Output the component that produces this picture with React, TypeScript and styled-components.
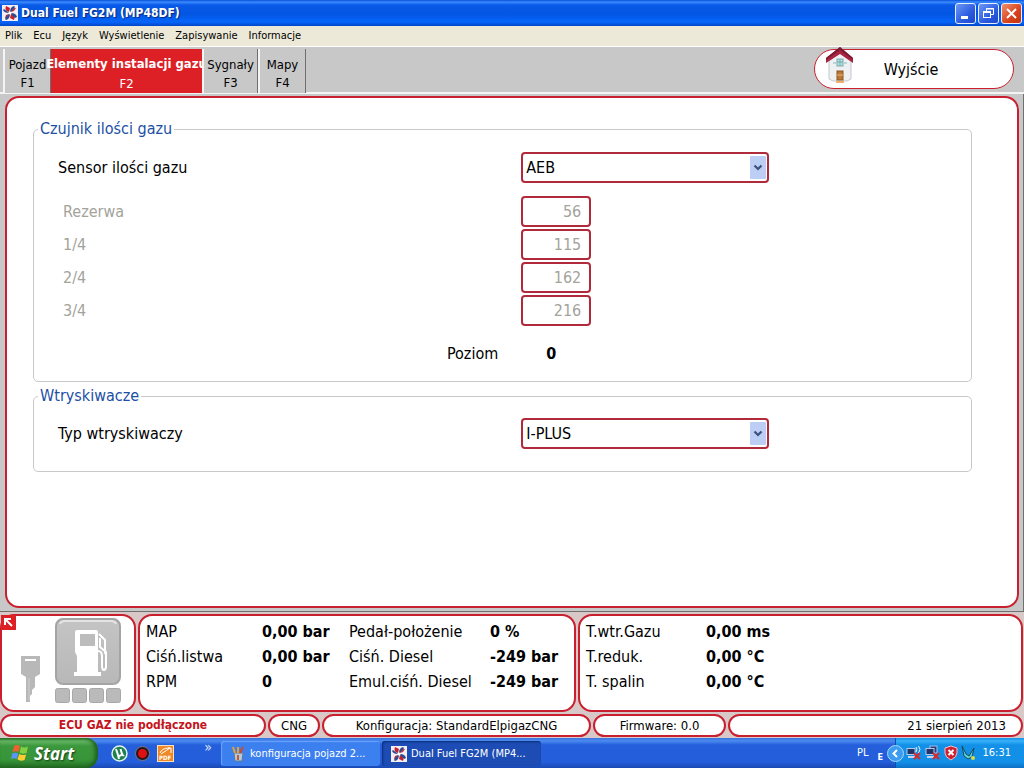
import React from "react";
import styled, { createGlobalStyle } from "styled-components";

const RED = "#c9202f";
const FACE = "#c8c8c8";

const GlobalStyle = createGlobalStyle`
  * { box-sizing: border-box; }
  body { margin: 0; background: ${FACE}; }
  body, button, input, select {
    font-family: "DejaVu Sans Condensed", "DejaVu Sans", "Noto Sans", sans-serif;
  }
`;

const Page = styled.div`
  min-height: 100vh;
  display: flex;
  flex-direction: column;
  color: #000;
  font-size: 16px;
  line-height: 20px;
`;

const TitleBar = styled.header`
  display: flex;
  align-items: center;
  gap: 3px;
  height: 26px;
  padding: 0 2px;
  background: linear-gradient(#0a50d8 0, #3a8bff 2px, #0a5ae8 5px, #0455e2 14px, #0566fb 22px, #0345c4 26px);
`;

const AppTitle = styled.h1`
  margin: 0;
  flex: 1;
  color: #fff;
  font-size: 12px;
  font-weight: bold;
  white-space: nowrap;
  text-shadow: 1px 1px 1px #0a2a80;
`;

const WindowButtons = styled.div`
  display: flex;
  gap: 2px;
`;

const WindowButton = styled.button<{ $close?: boolean }>`
  width: 21px;
  height: 21px;
  padding: 0;
  display: grid;
  place-items: center;
  border: 1px solid #e8eefc;
  border-radius: 3px;
  background: ${(p) => (p.$close ? "linear-gradient(135deg, #f0906c, #d8421c 60%, #c03410)" : "linear-gradient(135deg, #6c98f4, #2c5ce0 60%, #1c48cc)")};
`;

const MenuBar = styled.nav`
  display: flex;
  gap: 11px;
  height: 20px;
  padding: 0 5px;
  background: #ece9d8;
`;

const MenuItem = styled.button`
  padding: 0;
  border: 0;
  background: none;
  color: #000;
  font-size: 11px;
  line-height: 20px;
  white-space: nowrap;
`;

const ToolBar = styled.div`
  display: flex;
  justify-content: space-between;
  height: 48px;
  padding: 2px 10px 0 3px;
  border-top: 1px solid #fff;
  border-bottom: 2px solid #f4f4f4;
  background: ${FACE};
`;

const TabList = styled.div`
  display: flex;
`;

const Tab = styled.button<{ $active?: boolean; $width: number }>`
  width: ${(p) => p.$width}px;
  height: 44px;
  padding: 5px 0 0;
  display: flex;
  flex-direction: column;
  align-items: center;
  justify-content: center;
  border: 0;
  border-left: ${(p) => (p.$active ? "0" : "2px solid #f4f4f4")};
  border-right: ${(p) => (p.$active ? "0" : "1px solid #6e6e6e")};
  background: ${(p) => (p.$active ? "#dc2026" : FACE)};
  color: ${(p) => (p.$active ? "#fff" : "#000")};
  font-size: 13px;
  line-height: ${(p) => (p.$active ? 20 : 18)}px;
  white-space: nowrap;
  span:first-child { font-weight: ${(p) => (p.$active ? "bold" : "normal")}; }
`;

const ExitButton = styled.button`
  position: relative;
  width: 200px;
  height: 40px;
  padding: 0 6px 0 0;
  border: 1px solid ${RED};
  border-radius: 20px;
  background: #fff;
  color: #000;
  font-size: 16px;
  svg { position: absolute; left: 10px; top: -4px; }
`;

const Workspace = styled.main`
  flex: 1;
  display: flex;
  padding: 2px 4px 3px 5px;
  border-right: 1px solid #707070;
  border-bottom: 1px solid #707070;
`;

const Panel = styled.section`
  flex: 1;
  padding: 21px 45px 21px 26px;
  border: 2px solid ${RED};
  border-radius: 14px;
  background: #fff;
`;

const Group = styled.fieldset`
  min-width: 0;
  margin: 0 0 4px;
  padding: 13px 0 17px;
  border: 1px solid #c9c9c9;
  border-radius: 5px;
  &:last-child { padding: 12px 0 22px; }
`;

const GroupTitle = styled.legend`
  margin-left: 4px;
  padding: 0 2px;
  color: #1c50a4;
  font-size: 16px;
  line-height: 20px;
`;

const Row = styled.div<{ $gap?: number }>`
  display: grid;
  grid-template-columns: 52% 1fr;
  align-items: center;
  margin-top: ${(p) => p.$gap || 0}px;
`;

const Label = styled.label<{ $muted?: boolean }>`
  padding-left: ${(p) => (p.$muted ? 29 : 24)}px;
  color: ${(p) => (p.$muted ? "#a3a39b" : "#000")};
`;

const LevelLabel = styled.span`
  padding-right: 23px;
  text-align: right;
`;

const LevelValue = styled.output`
  padding-left: 25px;
  font-weight: bold;
`;

const SelectBox = styled.div`
  position: relative;
  width: 248px;
  svg { position: absolute; right: 3px; top: 4px; pointer-events: none; }
`;

const Select = styled.select`
  appearance: none;
  display: block;
  width: 100%;
  height: 31px;
  padding: 0 24px 0 3px;
  border: 2px solid #b02a3c;
  border-radius: 4px;
  background: #fff;
  color: #000;
  font-size: 16px;
`;

const NumberBox = styled.input`
  width: 70px;
  height: 31px;
  padding: 0 8px 0 0;
  border: 2px solid #b02a3c;
  border-radius: 4px;
  background: #fff;
  color: #a3a39b;
  font-size: 16px;
  text-align: right;
`;

const Dashboard = styled.section`
  display: grid;
  grid-template-columns: 136px minmax(0, 438fr) minmax(0, 445fr);
  gap: 2px;
  padding: 2px 1px 2px 0;
  background: #d8c8c8;
`;

const Card = styled.div`
  position: relative;
  height: 98px;
  border: 2px solid ${RED};
  border-radius: 14px;
  background: #fff;
`;

const IndicatorCard = styled(Card)`
  display: flex;
  gap: 15px;
  padding: 2px 0 0 19px;
`;

const KeyIcon = styled.svg`
  margin-top: 38px;
`;

const CornerButton = styled.button`
  position: absolute;
  left: -1px;
  top: -1px;
  width: 15px;
  height: 15px;
  padding: 0;
  display: grid;
  border: 0;
  background: #dc2026;
`;

const Readings = styled.dl<{ $columns: string }>`
  display: grid;
  grid-template-columns: ${(p) => p.$columns};
  margin: 0;
  padding: 3px 0 0 6px;
  line-height: 25px;
  white-space: nowrap;
  dt, dd { margin: 0; }
  dd { font-weight: bold; }
`;

const StatusBar = styled.footer`
  display: grid;
  grid-template-columns: 266fr 52fr 269fr 133fr 295fr;
  gap: 2px;
  padding: 0 1px 1px 0;
  background: #d8c8c8;
`;

const StatusPill = styled.div<{ $alert?: boolean; $right?: boolean }>`
  height: 23px;
  padding: 0 ${(p) => (p.$right ? 15 : 2)}px 0 2px;
  border: 2px solid ${RED};
  border-radius: 12px;
  background: #fff;
  color: ${(p) => (p.$alert ? "#c41420" : "#000")};
  font-size: ${(p) => (p.$alert ? 12 : 13)}px;
  font-weight: ${(p) => (p.$alert ? "bold" : "normal")};
  line-height: 19px;
  text-align: ${(p) => (p.$right ? "right" : "center")};
  white-space: nowrap;
`;

const TaskBar = styled.nav`
  display: flex;
  height: 30px;
  background: linear-gradient(#3a74dc 0, #4a8af0 3px, #245edb 7px, #245edb 24px, #1a48b4 30px);
  color: #fff;
`;

const StartButton = styled.button`
  display: flex;
  align-items: center;
  gap: 5px;
  width: 98px;
  padding: 0 0 0 11px;
  border: 0;
  border-radius: 0 12px 12px 0;
  background: linear-gradient(#2c7c2c 0, #66b866 3px, #3c983c 8px, #389438 22px, #226c22 30px);
  box-shadow: inset -3px 0 4px #1f5c1f;
  color: #fff;
  font-family: "Open Sans", "Noto Sans", sans-serif;
  font-size: 17px;
  font-style: italic;
  font-weight: bold;
  text-shadow: 1px 1px 2px #143c14;
`;

const QuickLaunch = styled.div`
  display: flex;
  align-items: center;
  gap: 6px;
  width: 122px;
  padding: 0 8px 0 13px;
`;

const IconButton = styled.button`
  display: grid;
  padding: 0;
  border: 0;
  background: none;
`;

const More = styled.button`
  align-self: flex-start;
  margin-left: auto;
  padding: 0;
  border: 0;
  background: none;
  color: #dce8ff;
  font-size: 14px;
  line-height: 18px;
`;

const Tasks = styled.div`
  display: flex;
  gap: 2px;
  flex: 1;
  min-width: 0;
  padding: 3px 0 2px 1px;
`;

const Task = styled.button<{ $active?: boolean }>`
  display: flex;
  align-items: center;
  gap: 4px;
  flex: 0 1 159px;
  min-width: 0;
  padding: 0 8px 0 9px;
  overflow: hidden;
  border: 0;
  border-radius: 3px;
  background: ${(p) => (p.$active ? "#1c4cb4" : "#3c80f0")};
  box-shadow: ${(p) => (p.$active ? "inset 1px 1px 2px #0c2c78" : "inset 1px 1px 1px #6ca4fc")};
  color: #fff;
  font-size: 11px;
  white-space: nowrap;
  svg { flex: none; }
`;

const Language = styled.div`
  display: flex;
  align-items: center;
  gap: 9px;
  padding: 0 12px 0 0;
  font-size: 11px;
  small { align-self: flex-end; font-size: 9px; font-weight: bold; line-height: 22px; }
`;

const Tray = styled.div`
  position: relative;
  display: flex;
  align-items: center;
  gap: 3px;
  width: 129px;
  padding: 0 13px 0 10px;
  background: linear-gradient(#1890e8 0, #38b0f8 3px, #1290e8 7px, #1290e8 24px, #0c70c4 30px);
  border-left: 1px solid #0c50b0;
  font-size: 11px;
  time { margin-left: auto; }
`;

const Expand = styled.button`
  position: absolute;
  left: -9px;
  top: 7px;
  display: grid;
  padding: 0;
  border: 0;
  background: none;
`;

const FanIcon = ({ size }: { size: number }) => (
  <svg width={size} height={size} viewBox="0 0 16 16" aria-hidden="true">
    <rect width="16" height="16" fill="#f4eef2" />
    <g fill="#c8202c">
      <path d="M7 7Q2 6 4 1l4 2z" />
      <path d="M9 9q5 1 3 6l-4-2z" />
      <path d="M7 9q-1 5-4 4l1-3z" fill="#b03048" />
      <path d="M9 7q1-5 5-4l-2 3z" fill="#d03440" />
    </g>
    <g fill="#2c4c90">
      <path d="M8 7Q8 2 12 1l1 1-3 4z" />
      <path d="M9 8q5 0 6 4l-2 1-3-3z" />
      <path d="M8 9q0 5-4 6l-1-1 3-4z" />
      <path d="M7 8Q2 8 1 5l1-1 4 3z" />
    </g>
    <circle cx="8" cy="8" r="1.300" fill="#fff" />
  </svg>
);

const HouseIcon = () => (
  <svg width="30" height="38" viewBox="0 0 30 38" aria-hidden="true">
    <path d="M4 15L15 6l11 9v18l-4 2H8l-4-2z" fill="#eef0f2" stroke="#c4c8cc" />
    <path d="M1 17V12L15 1l13 11v5L15 8z" fill="#a82440" />
    <path d="M1 12L15 1l13 11v2L15 4 1 14z" fill="#7c1830" />
    <rect x="12" y="13" width="6" height="7" fill="#b4e0e0" stroke="#78acb0" />
    <path d="M15 13v7M12 16h6" stroke="#78acb0" />
    <path d="M8 17h3M19 17h3" stroke="#88b8bc" />
    <rect x="12" y="25" width="6" height="9" fill="#b87838" stroke="#8c5420" />
    <path d="M12 29h6" stroke="#e8b870" />
    <path d="M11 36h8" stroke="#f0b070" strokeWidth="2" />
  </svg>
);

const DropArrow = () => (
  <svg width="16" height="23" viewBox="0 0 16 23" aria-hidden="true">
    <rect width="16" height="23" rx="1" fill="#bccef4" />
    <path d="M4.500 9.500L8 13l3.500-3.500" fill="none" stroke="#3c5080" strokeWidth="2.200" />
  </svg>
);

const PumpIcon = () => (
  <svg width="66" height="86" viewBox="0 0 66 86" aria-hidden="true">
    <defs>
      <linearGradient id="plate" x1="0" y1="0" x2="0" y2="1">
        <stop offset="0" stopColor="#c4c4c4" />
        <stop offset="1" stopColor="#b8b8b8" />
      </linearGradient>
    </defs>
    <rect x="1" y="1" width="64" height="65" rx="7" fill="url(#plate)" stroke="#a4a4a4" strokeWidth="2" />
    <path d="M5 6q1-3 5-3h46q4 0 5 3" fill="none" stroke="#e4e4e4" strokeWidth="2" />
    <path d="M22 12h19q2 0 2 2v40h3v4H19v-4h3V38l-2-4V14q0-2 2-2z" fill="#fff" />
    <rect x="25" y="16" width="15" height="12" fill="#bcbcbc" />
    <path d="M43 33q4 0 4 5v10q0 4 2 4t2-4V34l-6-5v-9M44 16l6 6v14" fill="none" stroke="#fff" strokeWidth="2" />
    <g fill="#bababa" stroke="#a8a8a8">
      <rect x="0.500" y="70.500" width="14" height="14" rx="2" />
      <rect x="17.500" y="70.500" width="14" height="14" rx="2" />
      <rect x="34.500" y="70.500" width="14" height="14" rx="2" />
      <rect x="51.500" y="70.500" width="14" height="14" rx="2" />
    </g>
  </svg>
);

const FlagIcon = () => (
  <svg width="18" height="18" viewBox="0 0 18 18" aria-hidden="true">
    <path d="M3 2q3-2 6 0L7.500 8Q5 6.500 1.500 8z" fill="#f06030" />
    <path d="M10 2.500q3 2 7 0L15.500 9q-4 1.500-7-.5z" fill="#80d040" />
    <path d="M1.200 9.500q3-1.500 6 0L6 15q-3-1.500-6 0z" fill="#5c94f8" />
    <path d="M8.200 10q3 1.800 7 .5L13.500 16q-4 1.500-7-.5z" fill="#fccc30" />
  </svg>
);

const NetIcon = ({ waves }: { waves?: boolean }) => (
  <svg width="16" height="16" viewBox="0 0 16 16" aria-hidden="true">
    {!waves && <rect x="5" y="1" width="7" height="7" fill="#28407c" stroke="#a8c0e8" />}
    <rect x="1" y="3.500" width="8" height="6" fill="#203468" stroke="#b8c8e8" />
    <path d="M2 12h7" stroke="#c8d4ec" strokeWidth="2" />
    {waves && <path d="M10 2q2 2 0 5M12.500 1q3 3.500 0 7" fill="none" stroke="#e4f0ff" />}
    <path d="M8 8l6 6M14 8l-6 6" stroke="#d82828" strokeWidth="2" />
  </svg>
);

const levels = [
  { id: "reserve", label: "Rezerwa", value: "56" },
  { id: "quarter", label: "1/4", value: "115" },
  { id: "half", label: "2/4", value: "162" },
  { id: "three-quarters", label: "3/4", value: "216" },
];

const engineReadings = [
  ["MAP", "0,00 bar"], ["Pedał-położenie", "0 %"],
  ["Ciśń.listwa", "0,00 bar"], ["Ciśń. Diesel", "-249 bar"],
  ["RPM", "0"], ["Emul.ciśń. Diesel", "-249 bar"],
];

const gasReadings = [["T.wtr.Gazu", "0,00 ms"], ["T.reduk.", "0,00 °C"], ["T. spalin", "0,00 °C"]];

const ReadingList = ({ items, columns }: { items: string[][]; columns: string }) => (
  <Readings $columns={columns}>
    {items.map(([name, value]) => (
      <React.Fragment key={name}>
        <dt>{name}</dt>
        <dd>{value}</dd>
      </React.Fragment>
    ))}
  </Readings>
);

export default function App() {
  return (
    <Page>
      <GlobalStyle />
      <TitleBar>
        <FanIcon size={16} />
        <AppTitle>Dual Fuel FG2M (MP48DF)</AppTitle>
        <WindowButtons>
          <WindowButton aria-label="Minimalizuj">
            <svg width="15" height="15"><path d="M3 11.500h7" stroke="#fff" strokeWidth="3" /></svg>
          </WindowButton>
          <WindowButton aria-label="Przywróć">
            <svg width="15" height="15" fill="none" stroke="#fff">
              <path d="M5.500 5V2.500h7v6H10M5 3h8M2 6.500h8" />
              <rect x="2.500" y="5.500" width="7" height="6" />
            </svg>
          </WindowButton>
          <WindowButton $close aria-label="Zamknij">
            <svg width="15" height="15"><path d="M3 3l9 9M12 3l-9 9" stroke="#fff" strokeWidth="2" /></svg>
          </WindowButton>
        </WindowButtons>
      </TitleBar>
      <MenuBar>
        {["Plik", "Ecu", "Język", "Wyświetlenie", "Zapisywanie", "Informacje"].map((name) => (
          <MenuItem key={name}>{name}</MenuItem>
        ))}
      </MenuBar>
      <ToolBar>
        <TabList role="tablist">
          <Tab role="tab" $width={48}><span>Pojazd</span><span>F1</span></Tab>
          <Tab role="tab" aria-selected $active $width={151}><span>Elementy instalacji gazu</span><span>F2</span></Tab>
          <Tab role="tab" $width={56}><span>Sygnały</span><span>F3</span></Tab>
          <Tab role="tab" $width={48}><span>Mapy</span><span>F4</span></Tab>
        </TabList>
        <ExitButton><HouseIcon />Wyjście</ExitButton>
      </ToolBar>
      <Workspace>
        <Panel>
          <Group>
            <GroupTitle>Czujnik ilości gazu</GroupTitle>
            <Row>
              <Label htmlFor="sensor">Sensor ilości gazu</Label>
              <SelectBox>
                <Select id="sensor" defaultValue="AEB"><option>AEB</option></Select>
                <DropArrow />
              </SelectBox>
            </Row>
            {levels.map((level, i) => (
              <Row key={level.id} $gap={i === 0 ? 13 : 2}>
                <Label $muted htmlFor={level.id}>{level.label}</Label>
                <NumberBox id={level.id} defaultValue={level.value} disabled />
              </Row>
            ))}
            <Row $gap={18}>
              <LevelLabel>Poziom</LevelLabel>
              <LevelValue>0</LevelValue>
            </Row>
          </Group>
          <Group>
            <GroupTitle>Wtryskiwacze</GroupTitle>
            <Row>
              <Label htmlFor="injectors">Typ wtryskiwaczy</Label>
              <SelectBox>
                <Select id="injectors" defaultValue="I-PLUS"><option>I-PLUS</option></Select>
                <DropArrow />
              </SelectBox>
            </Row>
          </Group>
        </Panel>
      </Workspace>
      <Dashboard>
        <IndicatorCard>
          <CornerButton aria-label="Rozwiń">
            <svg width="15" height="15"><path d="M4 10V4h6M4 4l7 7" fill="none" stroke="#fff" strokeWidth="2" /></svg>
          </CornerButton>
          <KeyIcon width="19" height="48" viewBox="0 0 19 48" aria-hidden="true">
            <path d="M0 0h19v18l-5 3v10l-3 3v4l-2 2v6H5V21l-5-3z" fill="#b8b8b8" />
            <path d="M4 4h11" stroke="#fff" strokeWidth="2" />
            <path d="M8 22v22" stroke="#d0d0d0" />
          </KeyIcon>
          <PumpIcon />
        </IndicatorCard>
        <Card><ReadingList items={engineReadings} columns="116px 87px 141px 1fr" /></Card>
        <Card><ReadingList items={gasReadings} columns="120px 1fr" /></Card>
      </Dashboard>
      <StatusBar>
        <StatusPill $alert>ECU GAZ nie podłączone</StatusPill>
        <StatusPill>CNG</StatusPill>
        <StatusPill>Konfiguracja: StandardElpigazCNG</StatusPill>
        <StatusPill>Firmware: 0.0</StatusPill>
        <StatusPill $right>21 sierpień 2013</StatusPill>
      </StatusBar>
      <TaskBar>
        <StartButton><FlagIcon />Start</StartButton>
        <QuickLaunch>
          <IconButton aria-label="µTorrent">
            <svg width="17" height="17" viewBox="0 0 17 17">
              <circle cx="8.500" cy="8.500" r="7.500" fill="#208050" stroke="#dcf4e8" strokeWidth="1.500" />
              <path d="M5 4l2 6q2 2 4-1L9.500 4M11 9q1 2 2 1M7 10l1 4" fill="none" stroke="#fff" strokeWidth="2" />
            </svg>
          </IconButton>
          <IconButton aria-label="Nagrywanie">
            <svg width="17" height="17" viewBox="0 0 17 17">
              <circle cx="8.500" cy="8.500" r="7" fill="#201820" stroke="#807888" />
              <circle cx="8.500" cy="8.500" r="4.500" fill="#e01010" />
            </svg>
          </IconButton>
          <IconButton aria-label="PDF">
            <svg width="17" height="17" viewBox="0 0 17 17">
              <rect x="0.500" y="0.500" width="16" height="16" fill="#f08828" stroke="#fce0b8" />
              <path d="M3 8q2-5 9-5M4 9l9-6M11 3h3v5" fill="none" stroke="#fff" />
              <text x="2" y="15" fontSize="6" fontWeight="bold" fill="#fff">PDF</text>
            </svg>
          </IconButton>
          <More aria-label="Więcej">»</More>
        </QuickLaunch>
        <Tasks>
          <Task>
            <svg width="16" height="16" viewBox="0 0 16 16" aria-hidden="true">
              <path d="M4 7h9l-1 8H5z" fill="#b8c8dc" stroke="#607890" />
              <path d="M5 7L3 1M8 7V1" stroke="#e8a030" strokeWidth="2" />
              <path d="M10 7l3-6" stroke="#d04828" strokeWidth="2" />
              <path d="M8 9v5" stroke="#c85830" strokeWidth="2" />
            </svg>
            konfiguracja pojazd 2...
          </Task>
          <Task $active><FanIcon size={16} />Dual Fuel FG2M (MP4...</Task>
        </Tasks>
        <Language><span>PL</span><small>E</small></Language>
        <Tray>
          <Expand aria-label="Pokaż ukryte ikony">
            <svg width="17" height="17" viewBox="0 0 17 17">
              <circle cx="8.500" cy="8.500" r="8" fill="#3c9cf0" stroke="#a8d8fc" />
              <path d="M10 5L6.500 8.500 10 12" fill="none" stroke="#fff" strokeWidth="2" />
            </svg>
          </Expand>
          <NetIcon waves />
          <NetIcon />
          <svg width="14" height="16" viewBox="0 0 14 16" aria-hidden="true">
            <path d="M7 1l6 2v5q0 4-6 7-6-3-6-7V3z" fill="#d02030" stroke="#f0c0c8" />
            <path d="M4.500 5l5 5M9.500 5l-5 5" stroke="#fff" strokeWidth="2" />
          </svg>
          <svg width="15" height="16" viewBox="0 0 15 16" aria-hidden="true">
            <path d="M1 1l4 8 3 2 5-8-2 9-4 2-4-3z" fill="#60d0d8" stroke="#184858" />
            <circle cx="12" cy="13" r="2" fill="#d8e040" />
          </svg>
          <time>16:31</time>
        </Tray>
      </TaskBar>
    </Page>
  );
}
